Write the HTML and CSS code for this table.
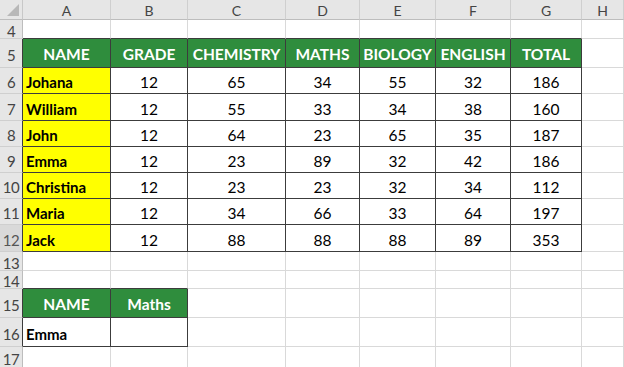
FILE: index.html
```html
<!DOCTYPE html>
<html>
<head>
<meta charset="utf-8">
<link rel="stylesheet" href="styles.css">
</head>
<body>
<div class="sheet">
  <div class="corner"><span class="tri"></span></div>
  <div class="ch">A</div><div class="ch">B</div><div class="ch">C</div><div class="ch">D</div><div class="ch">E</div><div class="ch">F</div><div class="ch">G</div><div class="ch">H</div>

  <div class="rh">4</div>
  <div class="c ab"></div><div class="c ab"></div><div class="c ab"></div><div class="c ab"></div><div class="c ab"></div><div class="c ab"></div><div class="c ab"></div><div class="c"></div>

  <div class="rh lb">5</div>
  <div class="c t hd">NAME</div><div class="c t hd">GRADE</div><div class="c t hd">CHEMISTRY</div><div class="c t hd">MATHS</div><div class="c t hd">BIOLOGY</div><div class="c t hd">ENGLISH</div><div class="c t hd">TOTAL</div><div class="c"></div>

  <div class="rh lb">6</div>
  <div class="c t nm">Johana</div><div class="c t n">12</div><div class="c t n">65</div><div class="c t n">34</div><div class="c t n">55</div><div class="c t n">32</div><div class="c t n">186</div><div class="c"></div>

  <div class="rh lb">7</div>
  <div class="c t nm">William</div><div class="c t n">12</div><div class="c t n">55</div><div class="c t n">33</div><div class="c t n">34</div><div class="c t n">38</div><div class="c t n">160</div><div class="c"></div>

  <div class="rh lb">8</div>
  <div class="c t nm">John</div><div class="c t n">12</div><div class="c t n">64</div><div class="c t n">23</div><div class="c t n">65</div><div class="c t n">35</div><div class="c t n">187</div><div class="c"></div>

  <div class="rh lb">9</div>
  <div class="c t nm">Emma</div><div class="c t n">12</div><div class="c t n">23</div><div class="c t n">89</div><div class="c t n">32</div><div class="c t n">42</div><div class="c t n">186</div><div class="c"></div>

  <div class="rh lb">10</div>
  <div class="c t nm">Christina</div><div class="c t n">12</div><div class="c t n">23</div><div class="c t n">23</div><div class="c t n">32</div><div class="c t n">34</div><div class="c t n">112</div><div class="c"></div>

  <div class="rh lb">11</div>
  <div class="c t nm">Maria</div><div class="c t n">12</div><div class="c t n">34</div><div class="c t n">66</div><div class="c t n">33</div><div class="c t n">64</div><div class="c t n">197</div><div class="c"></div>

  <div class="rh lb sel">12</div>
  <div class="c t nm">Jack</div><div class="c t n">12</div><div class="c t n">88</div><div class="c t n">88</div><div class="c t n">88</div><div class="c t n">89</div><div class="c t n">353</div><div class="c"></div>

  <div class="rh">13</div>
  <div class="c"></div><div class="c"></div><div class="c"></div><div class="c"></div><div class="c"></div><div class="c"></div><div class="c"></div><div class="c"></div>

  <div class="rh">14</div>
  <div class="c ab"></div><div class="c ab"></div><div class="c"></div><div class="c"></div><div class="c"></div><div class="c"></div><div class="c"></div><div class="c"></div>

  <div class="rh lb">15</div>
  <div class="c t hd">NAME</div><div class="c t hd">Maths</div><div class="c"></div><div class="c"></div><div class="c"></div><div class="c"></div><div class="c"></div><div class="c"></div>

  <div class="rh lb">16</div>
  <div class="c t nm plain">Emma</div><div class="c t"></div><div class="c"></div><div class="c"></div><div class="c"></div><div class="c"></div><div class="c"></div><div class="c"></div>

  <div class="rh">17</div>
  <div class="c"></div><div class="c"></div><div class="c"></div><div class="c"></div><div class="c"></div><div class="c"></div><div class="c"></div><div class="c"></div>
</div>
</body>
</html>
```

FILE: styles.css
```css
html, body {
  margin: 0;
  padding: 0;
  background: #ffffff;
  overflow: hidden;
}

.sheet {
  display: grid;
  grid-template-columns: 23px 88px 77px 98px 74px 76px 75px 71px 1fr;
  grid-template-rows: 20px 19px 29px 26px 27px 26px 26px 26px 26px 27px 19px 18px 29px 29px 21px;
  width: 624px;
  height: 367px;
  font-family: "Lato", "Liberation Sans", sans-serif;
  color: #000;
}

.sheet > div {
  box-sizing: border-box;
  display: flex;
  align-items: center;
  min-width: 0;
  overflow: hidden;
}

.corner {
  position: relative;
  background: #e6e6e6;
  border-right: 1px solid #c8c8c8;
  border-bottom: 1px solid #bdbdbd;
}

.tri {
  position: absolute;
  right: 3px;
  bottom: 3px;
  width: 0;
  height: 0;
  border-left: 12px solid transparent;
  border-bottom: 12px solid #b8b8b8;
}

.ch {
  justify-content: center;
  background: #e6e6e6;
  color: #444;
  font-size: 14px;
  padding-top: 1px;
  border-right: 1px solid #cfcfcf;
  border-bottom: 1px solid #bdbdbd;
}

.rh {
  justify-content: center;
  background: #e6e6e6;
  color: #444;
  font-size: 15px;
  padding-top: 3px;
  letter-spacing: -0.5px;
  border-right: 1px solid #bdbdbd;
  border-bottom: 1px solid #cfcfcf;
}

.rh.sel {
  background: #d9d9d9;
  color: #555;
}

.c {
  border-right: 1px solid #d9d9d9;
  border-bottom: 1px solid #d9d9d9;
}

.rh.lb {
  border-right: 1px solid #3c3c3c;
}

.c.ab {
  border-bottom: 1px solid #3c3c3c;
}

.c.t {
  border-right: 1px solid #3c3c3c;
  border-bottom: 1px solid #3c3c3c;
}

.hd {
  justify-content: center;
  background: #2f8d3d;
  color: #ffffff;
  font-weight: 700;
  font-size: 15.5px;
  padding-top: 1px;
}

.nm {
  background: #ffff00;
  font-weight: 700;
  font-size: 15px;
  padding-left: 3px;
  padding-top: 3px;
}

.nm.plain {
  background: #ffffff;
}

.n {
  justify-content: center;
  font-size: 15.5px;
  padding-top: 3px;
}
```
